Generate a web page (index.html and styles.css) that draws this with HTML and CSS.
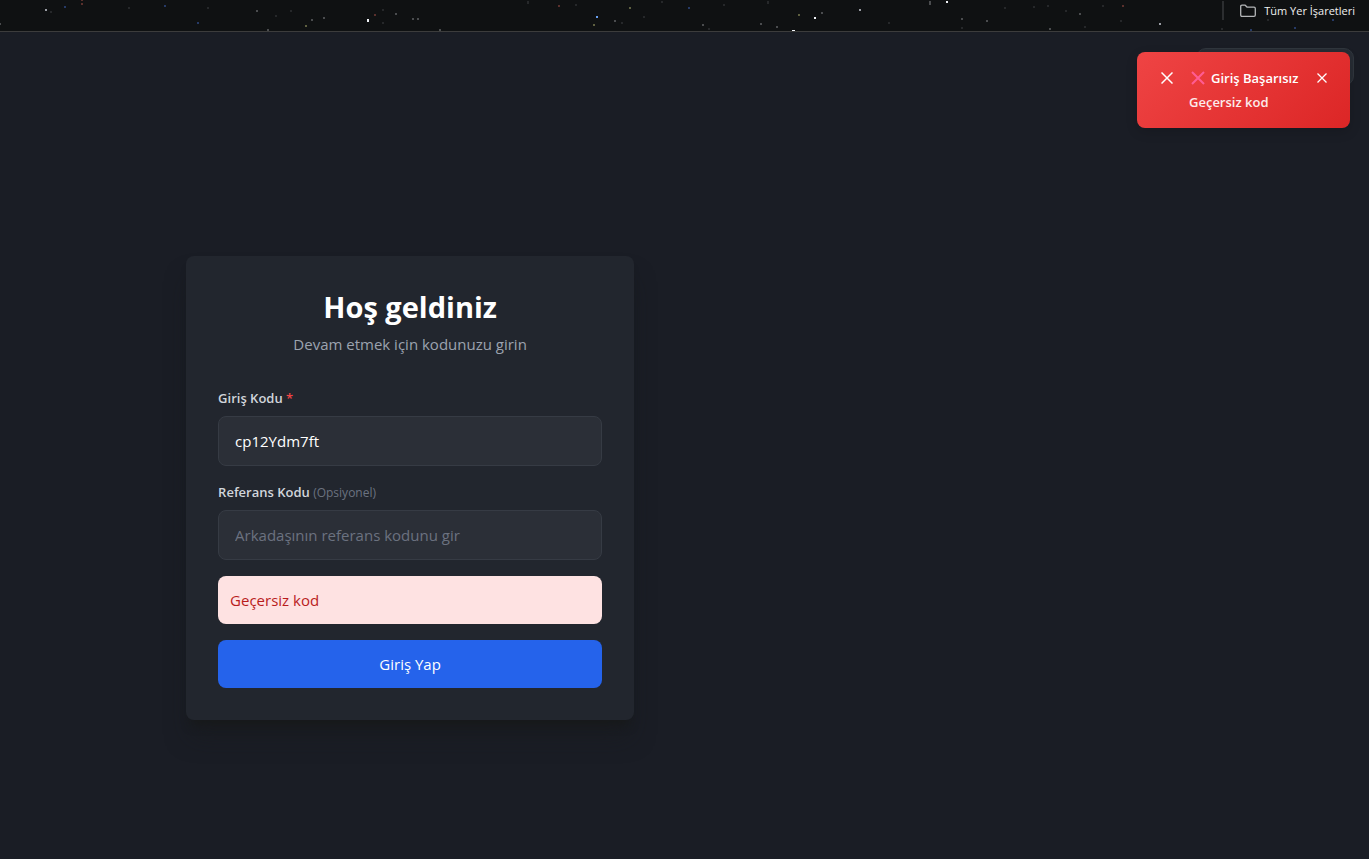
FILE: index.html
```html
<!DOCTYPE html>
<html lang="tr">
<head>
    <meta charset="UTF-8">
    <meta name="viewport" content="width=device-width, initial-scale=1.0">
    <title>Giriş Yap</title>
    <link rel="stylesheet" href="styles.css">
</head>
<body>
<header class="bookmarks-bar">
    <!-- Starry sky -->
    <svg class="stars" width="1369" height="31" aria-hidden="true">
        <g fill="#26282a">
            <rect x="50" y="11" width="2" height="2"/>
            <rect x="128" y="7" width="2" height="2"/>
            <rect x="207" y="7" width="2" height="2"/>
            <rect x="275" y="15" width="2" height="2"/>
            <rect x="290" y="10" width="2" height="2"/>
            <rect x="382" y="9" width="2" height="2"/>
            <rect x="382" y="22" width="2" height="2"/>
            <rect x="527" y="1" width="2" height="3"/>
            <rect x="575" y="4" width="2" height="2"/>
            <rect x="643" y="16" width="2" height="2"/>
            <rect x="621" y="22" width="2" height="2"/>
            <rect x="661" y="1" width="2" height="2"/>
            <rect x="723" y="4" width="2" height="2"/>
            <rect x="767" y="1" width="2" height="3"/>
            <rect x="708" y="28" width="2" height="2"/>
            <rect x="888" y="22" width="2" height="2"/>
            <rect x="1004" y="7" width="2" height="2"/>
            <rect x="1033" y="6" width="2" height="2"/>
            <rect x="1047" y="5" width="2" height="2"/>
            <rect x="1065" y="10" width="2" height="2"/>
            <rect x="961" y="27" width="2" height="2"/>
            <rect x="1084" y="26" width="2" height="2"/>
            <rect x="1102" y="5" width="2" height="2"/>
            <rect x="1120" y="20" width="2" height="2"/>
            <rect x="1221" y="28" width="2" height="2"/>
            <rect x="1267" y="19" width="2" height="2"/>
        </g>
        <g fill="#4a4c4e">
            <rect x="0" y="23" width="1" height="2"/>
            <rect x="256" y="10" width="2" height="2"/>
            <rect x="267" y="29" width="2" height="2"/>
            <rect x="311" y="19" width="2" height="2"/>
            <rect x="323" y="17" width="2" height="2"/>
            <rect x="395" y="13" width="2" height="2"/>
            <rect x="412" y="18" width="2" height="2"/>
            <rect x="417" y="18" width="2" height="2"/>
            <rect x="439" y="29" width="2" height="2"/>
            <rect x="614" y="20" width="2" height="2"/>
            <rect x="702" y="24" width="2" height="2"/>
            <rect x="760" y="23" width="2" height="2"/>
            <rect x="776" y="26" width="2" height="2"/>
            <rect x="821" y="12" width="2" height="2"/>
            <rect x="929" y="1" width="2" height="4"/>
            <rect x="961" y="18" width="2" height="2"/>
            <rect x="986" y="20" width="2" height="2"/>
            <rect x="1049" y="28" width="2" height="2"/>
            <rect x="1079" y="13" width="2" height="2"/>
        </g>
        <g fill="#263a66">
            <rect x="64" y="6" width="2" height="2"/>
            <rect x="164" y="5" width="2" height="2"/>
            <rect x="197" y="22" width="2" height="2"/>
            <rect x="688" y="7" width="2" height="2"/>
            <rect x="1250" y="29" width="2" height="2"/>
            <rect x="1294" y="27" width="2" height="2"/>
            <rect x="1332" y="19" width="2" height="2"/>
        </g>
        <g fill="#5a302c">
            <rect x="81" y="0" width="2" height="1"/>
            <rect x="81" y="3" width="2" height="2"/>
            <rect x="558" y="5" width="2" height="2"/>
            <rect x="374" y="14" width="2" height="2"/>
            <rect x="1122" y="5" width="2" height="2"/>
        </g>
        <g fill="#5e6040">
            <rect x="305" y="25" width="2" height="2"/>
            <rect x="593" y="24" width="2" height="2"/>
            <rect x="629" y="7" width="2" height="2"/>
            <rect x="798" y="14" width="2" height="2"/>
        </g>
        <g fill="#9a9da4">
            <rect x="45" y="9" width="2" height="2"/>
            <rect x="859" y="9" width="2" height="2"/>
            <rect x="1159" y="23" width="2" height="2"/>
        </g>
        <g fill="#f0f2f6">
            <rect x="367" y="19" width="2" height="3"/>
            <rect x="814" y="17" width="2" height="2"/>
            <rect x="792" y="30" width="3" height="1"/>
            <rect x="946" y="1" width="2" height="2"/>
        </g>
        <rect x="596" y="16" width="2" height="2" fill="#68a0f0"/>
    </svg>
    <a class="bookmarks-link" href="#">
        <svg width="16" height="14" viewBox="0 0 16 14" fill="none" stroke="#b4b6b8" stroke-width="1.3" stroke-linejoin="round" aria-hidden="true">
            <path d="M.7 11V2.500Q.7 1.200 2 1.200H5.200L7.200 3.200H14Q15.300 3.200 15.300 4.500V11Q15.300 12.300 14 12.300H2Q.7 12.300 .7 11Z"/>
        </svg>
        Tüm Yer İşaretleri
    </a>
</header>

<main class="page">
    <section class="login-column">
        <div class="card">
            <h1>Hoş geldiniz</h1>
            <p class="subtitle">Devam etmek için kodunuzu girin</p>
            <form class="login-form" onsubmit="return false">
                <div class="field">
                    <label for="code">Giriş Kodu <span class="required">*</span></label>
                    <input type="text" id="code" name="code" value="cp12Ydm7ft">
                </div>
                <div class="field">
                    <label for="reference">Referans Kodu <span class="optional">(Opsiyonel)</span></label>
                    <input type="text" id="reference" name="reference" placeholder="Arkadaşının referans kodunu gir">
                </div>
                <div class="error">Geçersiz kod</div>
                <button type="submit" class="submit">Giriş Yap</button>
            </form>
        </div>
    </section>
    <div class="panel-behind"></div>
    <div class="toast" role="alert">
        <svg class="toast-icon" width="12" height="12" viewBox="0 0 12 12" stroke="#fff" stroke-width="1.500" aria-hidden="true">
            <path d="M.5 .5L11.500 11.500M11.500 .5L.5 11.500"/>
        </svg>
        <div class="toast-body">
            <div class="toast-title">
                <svg width="14" height="14" viewBox="0 0 14 14" stroke="#ff5c93" stroke-width="2" aria-hidden="true">
                    <path d="M1 1L13 13M13 1L1 13"/>
                </svg>
                Giriş Başarısız
            </div>
            <div class="toast-text">Geçersiz kod</div>
        </div>
        <button type="button" class="toast-close" aria-label="Kapat">
            <svg width="10" height="10" viewBox="0 0 10 10" stroke="#fff" stroke-width="1.300" aria-hidden="true">
                <path d="M.5 .5L9.500 9.500M9.500 .5L.5 9.500"/>
            </svg>
        </button>
    </div>
</main>
</body>
</html>
```
FILE: styles.css
```css
* {
    box-sizing: border-box;
}

body {
    font-family: "Segoe UI", "Open Sans", "Noto Sans", sans-serif;
    margin: 0;
    background-color: #1a1d25;
    color: #fff;
}

.bookmarks-bar {
    position: relative;
    display: flex;
    justify-content: flex-end;
    height: 32px;
    padding: 1px 14px 0 0;
    background-color: #0f1112;
    border-bottom: 1px solid #3c3c3c;
    overflow: hidden;
}

.stars {
    position: absolute;
    top: 0;
    left: 0;
}

.bookmarks-link {
    position: relative;
    display: flex;
    align-items: center;
    gap: 8px;
    height: 19px;
    padding-left: 16px;
    border-left: 2px solid #2c2e30;
    color: #f0f0f0;
    font-size: 11px;
    text-decoration: none;
}

.page {
    position: relative;
    display: grid;
    grid-template-columns: 3fr 2fr;
    padding-right: 2px;
}

.login-column {
    display: flex;
    justify-content: center;
    padding: 224px 16px 64px;
}

.card {
    width: 100%;
    max-width: 448px;
    padding: 32px;
    background-color: #22262e;
    border-radius: 8px;
    box-shadow: 0 20px 25px -5px rgba(24, 26, 27, 0.5), 0 10px 10px -5px #181a1b;
}

h1 {
    margin: 0 0 6px;
    font-size: 29px;
    line-height: 38px;
    text-align: center;
}

.subtitle {
    margin: 0 0 32px;
    font-size: 15px;
    line-height: 24px;
    text-align: center;
    color: #9ca3af;
}

.login-form {
    display: flex;
    flex-direction: column;
    gap: 16px;
}

label {
    display: block;
    margin-bottom: 8px;
    font-size: 13px;
    font-weight: 600;
    line-height: 20px;
    color: #d1d5db;
}

.required {
    color: #ef4444;
}

.optional {
    font-size: 12px;
    font-weight: 400;
    line-height: 1;
    color: #6b7280;
}

input {
    display: block;
    width: 100%;
    height: 50px;
    padding: 0 16px;
    font-family: inherit;
    font-size: 15px;
    color: #fff;
    background-color: #2b2f37;
    border: 1px solid #363b44;
    border-radius: 8px;
}

input::placeholder {
    color: #6b7280;
}

.error {
    padding: 12px;
    font-size: 15px;
    line-height: 24px;
    color: #b91c1c;
    background-color: #fee2e2;
    border-radius: 8px;
}

.submit {
    height: 48px;
    font-family: inherit;
    font-size: 15px;
    color: #fff;
    background-color: #2563eb;
    border: none;
    border-radius: 8px;
    cursor: pointer;
}

.panel-behind {
    position: absolute;
    top: 16px;
    right: 15px;
    width: 158px;
    height: 38px;
    background-color: #272c34;
    border: 1px solid #30363d;
    border-radius: 10px;
}

.toast {
    position: absolute;
    top: 20px;
    right: 19px;
    display: flex;
    align-items: flex-start;
    width: 213px;
    height: 76px;
    padding: 14px 23px;
    font-size: 13px;
    font-weight: 600;
    line-height: 24px;
    background: linear-gradient(135deg, #ef4444, #dc2626);
    border-radius: 8px;
    box-shadow: 0 4px 12px rgba(0, 0, 0, 0.15);
}

.toast-icon {
    margin: 6px 16px 0 1px;
}

.toast-title {
    display: flex;
    align-items: center;
    gap: 6px;
    padding-left: 2px;
    white-space: nowrap;
}

.toast-body {
    flex: 1;
}

.toast-text {
    opacity: 0.9;
}

.toast-close {
    display: flex;
    align-items: center;
    height: 24px;
    padding: 0;
    background: none;
    border: none;
    cursor: pointer;
}
```
